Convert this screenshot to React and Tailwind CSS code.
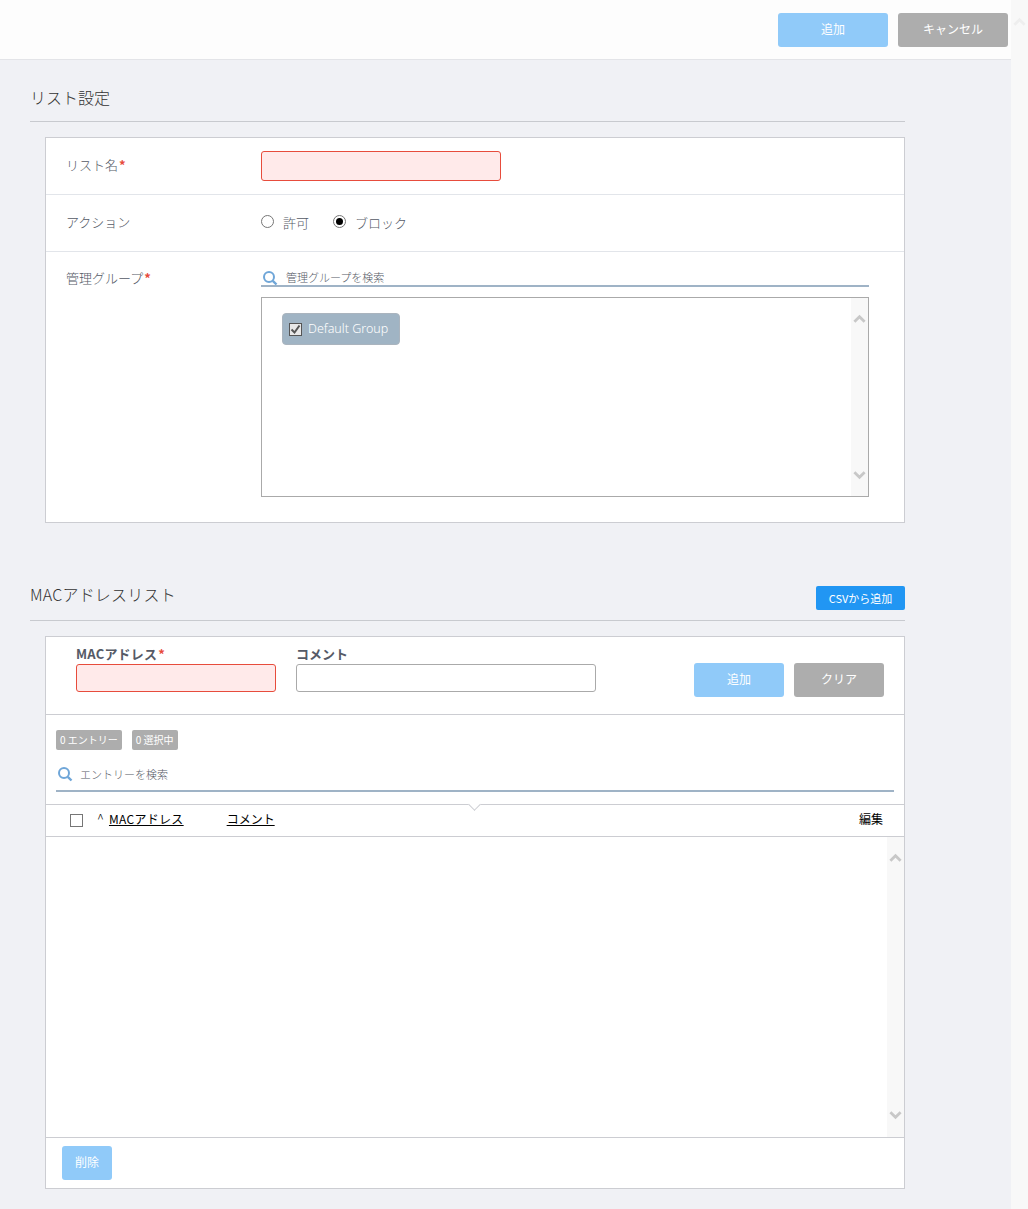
import React from 'react';

const font = { fontFamily: '"Noto Sans CJK JP", "Noto Sans", sans-serif' };

function Chevron({ up, className = '' }) {
  return (
    <svg className={className} width="13" height="10" viewBox="0 0 14 10" fill="none" stroke="#c8c8c8" strokeWidth="3">
      <path d={up ? 'M1.5 8 7 2.5 12.5 8' : 'M1.5 2 7 7.5 12.5 2'} />
    </svg>
  );
}

function SearchIcon() {
  return (
    <svg width="16" height="16" viewBox="0 0 16 16" fill="none" stroke="#6fa6d8" strokeWidth="2" className="shrink-0">
      <circle cx="7" cy="7" r="5" />
      <path d="M10.8 10.8 14.5 14.5" strokeWidth="2.4" />
    </svg>
  );
}

function ScrollTrack({ className = '' }) {
  return (
    <div className={`flex flex-col items-center justify-between bg-[#f8f8f8] ${className}`}>
      <Chevron up />
      <Chevron />
    </div>
  );
}

function Btn({ children, gray, className = '' }) {
  return (
    <button className={`flex items-center justify-center rounded-[3px] pb-[3px] text-[12px] text-white ${gray ? 'bg-[#adadad]' : 'bg-[#90caf9]'} ${className}`}>
      {children}
    </button>
  );
}

function Req() {
  return <span className="ml-px font-bold text-[#e74c3c]">*</span>;
}

function Radio({ checked, label, className = '' }) {
  return (
    <label className={`flex items-center ${className}`}>
      <span className="flex h-[13px] w-[13px] -translate-y-[2px] items-center justify-center rounded-full border border-[#767676] bg-white">
        {checked && <span className="h-[7px] w-[7px] rounded-full bg-black" />}
      </span>
      <span className="ml-[9px] pb-[2px] text-[13px] font-light leading-none text-[#555a66]">{label}</span>
    </label>
  );
}

function Badge({ children }) {
  return (
    <span className="flex h-5 items-center rounded-[2px] bg-[#adadad] px-1 pb-[2px] text-[10px] whitespace-nowrap text-white">
      {children}
    </span>
  );
}

export default function App() {
  return (
    <div className="flex h-[1209px] w-[1028px] overflow-hidden bg-[#f0f1f5] text-[#555a66]" style={font}>
      <div className="w-[1011px] shrink-0">
        {/* top action bar */}
        <div className="flex h-[60px] items-start justify-end gap-[10px] border-b border-[#e3e4e8] bg-[#fdfdfd] pt-[13px] pr-[3px]">
          <Btn className="h-[34px] w-[110px]">追加</Btn>
          <Btn gray className="h-[34px] w-[110px]">キャンセル</Btn>
        </div>

        {/* list settings */}
        <div className="ml-[30px] flex h-[62px] w-[875px] items-center border-b border-[#c8cacf] pt-[13px]">
          <h2 className="text-[16px] leading-none font-light text-[#333]">リスト設定</h2>
        </div>
        <div className="mt-[15px] ml-[45px] w-[860px] border border-[#cccdd2] bg-white">
          <div className="flex h-[57px] items-center border-b border-[#e2e5ea]">
            <div className="w-[215px] pb-[2px] pl-5 text-[13px] font-light">リスト名<Req /></div>
            <div className="h-[30px] w-[240px] rounded-[3px] border border-[#e74c3c] bg-[#ffeaea]" />
          </div>
          <div className="flex h-[57px] items-center border-b border-[#e2e5ea]">
            <div className="w-[215px] pb-[2px] pl-5 text-[13px] font-light">アクション</div>
            <Radio label="許可" />
            <Radio checked label="ブロック" className="ml-6" />
          </div>
          <div className="flex h-[270px]">
            <div className="w-[215px] pt-4 pl-5 text-[13px] font-light">管理グループ<Req /></div>
            <div className="w-[608px] pt-3">
              <div className="flex h-[23px] items-center border-b-2 border-[#9fb3c6] pt-[6px] pl-[1px]">
                <SearchIcon />
                <span className="ml-2 text-[11px] font-light">管理グループを検索</span>
              </div>
              <div className="mt-[10px] flex h-[200px] border border-[#aaaaaa] bg-white">
                <div className="flex-1 pt-[15px] pl-5">
                  <div className="flex h-8 w-[118px] items-center rounded-[4px] border border-[#aab4be] bg-[#a0b4c4] pl-[6px] text-white">
                    <span className="flex h-[13px] w-[13px] items-center justify-center border border-[#555] bg-[#e8e8e8]">
                      <svg width="11" height="11" viewBox="0 0 11 11" fill="none" stroke="#555" strokeWidth="2">
                        <path d="M1.5 5.5 4.5 8.5 9.5 1.5" />
                      </svg>
                    </span>
                    <span className="ml-[6px] text-[12.5px] font-light" style={{ fontFamily: '"Noto Sans", sans-serif' }}>Default Group</span>
                  </div>
                </div>
                <ScrollTrack className="w-[17px] py-4" />
              </div>
            </div>
          </div>
        </div>

        {/* MAC address list */}
        <div className="ml-[30px] flex h-[98px] w-[875px] items-end justify-between border-b border-[#c8cacf] pb-[10px]">
          <h2 className="pb-2 text-[16px] leading-none font-light tracking-[0.2px] text-[#333]">MACアドレスリスト</h2>
          <button className="flex h-6 w-[89px] items-center justify-center rounded-[2px] bg-[#2196f3] text-[11px] text-white">CSVから追加</button>
        </div>
        <div className="mt-[15px] ml-[45px] w-[860px] border border-[#cccdd2] bg-white">
          <div className="flex h-[78px] border-b border-[#cccdd2]">
            <div className="ml-[30px] w-[200px] pt-2">
              <div className="text-[13px] leading-[18px] font-bold tracking-[0.2px]">MACアドレス<Req /></div>
              <div className="mt-px h-[28px] rounded-[3px] border border-[#e74c3c] bg-[#ffeaea]" />
            </div>
            <div className="ml-5 w-[300px] pt-2">
              <div className="text-[13px] leading-[18px] font-bold">コメント</div>
              <div className="mt-px h-[28px] rounded-[3px] border border-[#aaaaaa] bg-white" />
            </div>
            <div className="ml-[98px] flex gap-[10px] pt-[26px]">
              <Btn className="h-[34px] w-[90px]">追加</Btn>
              <Btn gray className="h-[34px] w-[90px]">クリア</Btn>
            </div>
          </div>

          <div className="relative h-[90px] border-b border-[#cccdd2] px-[10px] pt-[15px]">
            <div className="flex gap-[10px]">
              <Badge>0 エントリー</Badge>
              <Badge>0 選択中</Badge>
            </div>
            <div className="mt-[12px] flex h-[30px] items-center border-b-2 border-[#9fb3c6] pb-1 pl-[1px]">
              <SearchIcon />
              <span className="ml-[7px] text-[11px] font-light">エントリーを検索</span>
            </div>
            {/* notch under the rule */}
            <span className="absolute -bottom-[5px] left-[424px] h-[9px] w-[9px] rotate-45 border-r border-b border-[#cccdd2] bg-white" />
          </div>

          <div className="flex h-8 items-center border-b border-[#cccdd2] text-[12px] text-black">
            <span className="ml-6 h-[13px] w-[13px] border border-[#767676] bg-white" />
            <span className="ml-[14px] pb-1 text-[13px] leading-none font-light">^</span>
            <span className="ml-[5px] pb-[3px] tracking-[0.3px] underline">MACアドレス</span>
            <span className="ml-[43px] pb-[3px] underline">コメント</span>
            <span className="mr-[21px] ml-auto pb-[3px]">編集</span>
          </div>

          <div className="flex h-[301px] justify-end border-b border-[#cccdd2]">
            <ScrollTrack className="w-[17px] pt-4 pb-[17px]" />
          </div>

          <div className="h-[50px] pt-2 pl-4">
            <Btn className="h-[34px] w-[50px]">削除</Btn>
          </div>
        </div>
      </div>

      {/* page scrollbar */}
      <div className="flex w-[17px] shrink-0 justify-center bg-[#f8f8f8] pt-[17px]">
        <svg width="13" height="10" viewBox="0 0 14 10" fill="none" stroke="#eeeeee" strokeWidth="3">
          <path d="M1.5 8 7 2.5 12.5 8" />
        </svg>
      </div>
    </div>
  );
}
